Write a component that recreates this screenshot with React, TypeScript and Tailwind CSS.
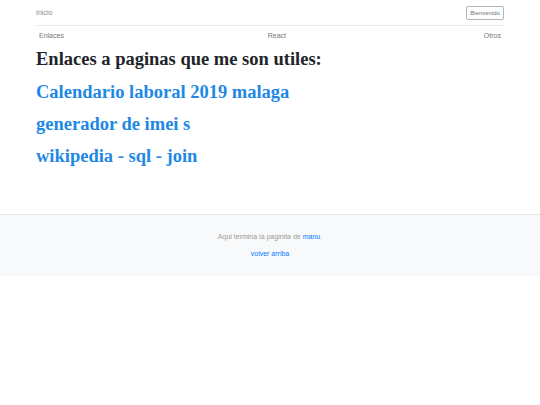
import React from 'react';

const links = ['Calendario laboral 2019 malaga', 'generador de imei s', 'wikipedia - sql - join'];

export default function App() {
  return (
    <div className="min-h-[405px] bg-white font-['Liberation_Sans',Arial,sans-serif]">
      <div className="mx-auto w-[468px]">
        <header className="flex items-center justify-between h-[26px] border-b border-[#e9ecef]">
          <span className="text-[7px] text-[#888] pt-[1px]">Inicio</span>
          <button className="text-[6px] text-[#6c757d] border border-[#adb5bd] rounded-[2px] px-[3px] h-[14px] leading-none">
            Bienvenido
          </button>
        </header>
        <nav className="flex justify-between px-[3px] h-[20px] items-center text-[7px] text-[#777]">
          <span>Enlaces</span>
          <span className="pl-[6px]">React</span>
          <span>Otros</span>
        </nav>
        <main className="font-['Liberation_Serif',serif] font-bold pt-[1px] pb-[38px]">
          <h3 className="text-[18.5px] leading-[24px] text-[#212529] mb-[9px]">Enlaces a paginas que me son utiles:</h3>
          {links.map((l) => (
            <h3 key={l} className="text-[18.5px] leading-[24px] text-[#1e88e5] mb-[8px]">
              <a>{l}</a>
            </h3>
          ))}
        </main>
      </div>
      <footer className="bg-[#f8f9fa] border-t border-[#e5e5e5] h-[62px] flex flex-col items-center pt-[17px] text-[7px] text-[#999]">
        <p>
          Aqui termina la paginita de <a className="text-[#007bff]">manu</a>.
        </p>
        <p className="mt-[6px]">
          <a className="text-[#007bff]">volver arriba</a>
        </p>
      </footer>
    </div>
  );
}
